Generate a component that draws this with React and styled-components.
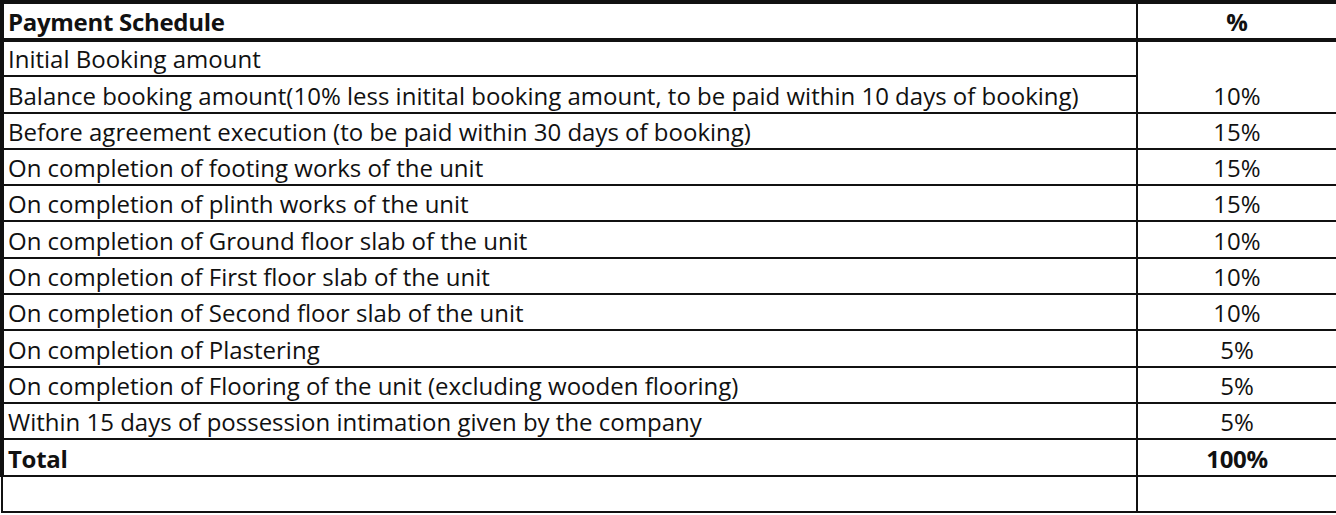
import React from 'react';
import styled, { createGlobalStyle, css } from 'styled-components';

const GlobalStyle = createGlobalStyle`
  html, body {
    margin: 0;
    padding: 0;
    background: #ffffff;
    overflow: hidden;
  }
`;

const StyledWrapper = styled.div`
  width: 1336px;
  height: 515px;
  overflow: hidden;
  background: white;
`;

const StyledTable = styled.table`
  width: 1338px;
  border-collapse: collapse;
  table-layout: fixed;
  font-family: "Open Sans", Lato, sans-serif;
  font-size: 24px;
  color: #111;
`;

const StyledRow = styled.tr`
  height: 36.3px;
  ${({ header }) => header && css`
    height: 38px;
  `}
`;

const cellStyle = css`
  border: 2px solid #111;
  padding: 0 0 1px 4px;
  line-height: 30px;
  white-space: nowrap;
  overflow: hidden;
  vertical-align: bottom;
  font-weight: ${({ bold }) => (bold ? 700 : 400)};
  letter-spacing: ${({ bold }) => (bold ? '-0.3px' : '0')};
`;

const StyledLabel = styled.td`
  ${cellStyle}
  border-left-width: ${({ thin }) => (thin ? '2px' : '4px')};
  ${({ header }) => header && css`
    border-top-width: 4px;
    border-bottom-width: 4px;
  `}
`;

const StyledValue = styled.td`
  ${cellStyle}
  padding-left: 0;
  text-align: center;
  ${({ header }) => header && css`
    border-top-width: 4px;
    border-bottom-width: 4px;
  `}
`;

const rows = [
  ['Before agreement execution (to be paid within 30 days of booking)', '15%'],
  ['On completion of footing works of the unit', '15%'],
  ['On completion of plinth works of the unit', '15%'],
  ['On completion of Ground floor slab of the unit', '10%'],
  ['On completion of First floor slab of the unit', '10%'],
  ['On completion of Second floor slab of the unit', '10%'],
  ['On completion of Plastering', '5%'],
  ['On completion of Flooring of the unit (excluding wooden flooring)', '5%'],
  ['Within 15 days of possession intimation given by the company', '5%'],
];

export default () => (
  <StyledWrapper>
    <GlobalStyle />
    <StyledTable>
      <colgroup>
        <col />
        <col style={{ width: '200px' }} />
      </colgroup>
      <tbody>
        <StyledRow header>
          <StyledLabel header bold>Payment Schedule</StyledLabel>
          <StyledValue header bold>%</StyledValue>
        </StyledRow>
        <StyledRow>
          <StyledLabel>Initial Booking amount</StyledLabel>
          <StyledValue rowSpan={2}>10%</StyledValue>
        </StyledRow>
        <StyledRow>
          <StyledLabel>Balance booking amount(10% less initital booking amount, to be paid within 10 days of booking)</StyledLabel>
        </StyledRow>
        {rows.map(([label, value]) => (
          <StyledRow key={label}>
            <StyledLabel>{label}</StyledLabel>
            <StyledValue>{value}</StyledValue>
          </StyledRow>
        ))}
        <StyledRow>
          <StyledLabel bold>Total</StyledLabel>
          <StyledValue bold>100%</StyledValue>
        </StyledRow>
        <StyledRow>
          <StyledLabel thin />
          <StyledValue />
        </StyledRow>
      </tbody>
    </StyledTable>
  </StyledWrapper>
);
